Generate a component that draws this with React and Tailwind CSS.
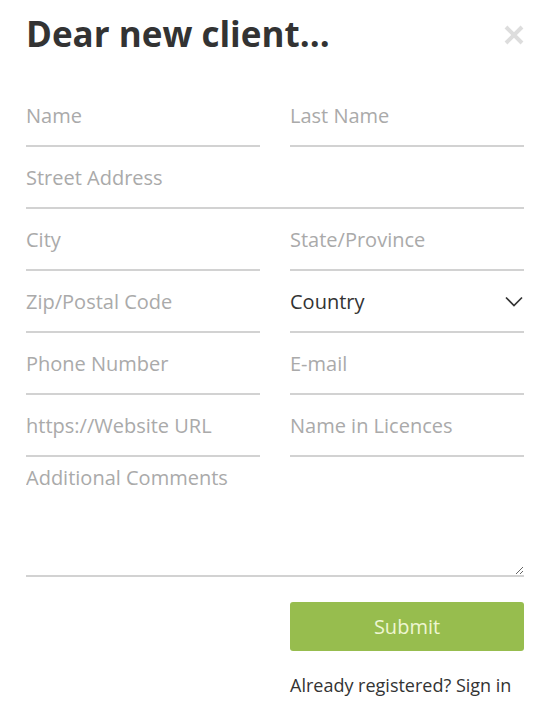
const field =
  'w-full h-[62px] pt-[1px] bg-transparent border-0 border-b-2 border-[#d2d2d2] text-[20px] text-[#333] placeholder:text-[#aaa] focus:outline-none'

function Field({ placeholder, wide }) {
  return (
    <div className={wide ? 'col-span-2' : ''}>
      <input className={field} placeholder={placeholder} />
    </div>
  )
}

export default function App() {
  return (
    <div
      className="w-[552px] min-h-[709px] bg-white pl-[26px] pr-[28px] pt-[15px]"
      style={{ fontFamily: '"Open Sans", "Liberation Sans", sans-serif' }}
    >
      <div className="flex items-start justify-between">
        <h1 className="text-[35px] leading-[38px] font-bold text-[#333]">Dear new client...</h1>
        <button className="mt-[10px] text-[#ddd]" aria-label="Close">
          <svg width="20" height="20" viewBox="0 0 20 20" fill="none" stroke="currentColor" strokeWidth="4">
            <path d="M2 2 L18 18 M18 2 L2 18" />
          </svg>
        </button>
      </div>

      <form className="mt-[32px] grid grid-cols-2 gap-x-[30px]">
        <Field placeholder="Name" />
        <Field placeholder="Last Name" />
        <Field placeholder="Street Address" wide />
        <Field placeholder="City" />
        <Field placeholder="State/Province" />
        <Field placeholder="Zip/Postal Code" />
        <div className="h-[62px] pt-[1px] border-b-2 border-[#d2d2d2] flex items-center justify-between">
          <span className="text-[20px] text-[#333]">Country</span>
          <svg width="18" height="11" viewBox="0 0 18 11" fill="none" stroke="#333" strokeWidth="1.7" className="mr-[1px]">
            <path d="M1 1.5 L9 9.5 L17 1.5" />
          </svg>
        </div>
        <Field placeholder="Phone Number" />
        <Field placeholder="E-mail" />
        <Field placeholder="https://Website URL" />
        <Field placeholder="Name in Licences" />
        <div className="col-span-2">
          <textarea
            className="block w-full h-[120px] pt-[9px] bg-transparent border-0 border-b-2 border-[#d2d2d2] text-[20px] leading-[24px] text-[#333] placeholder:text-[#aaa] focus:outline-none"
            placeholder="Additional Comments"
          />
        </div>
        <div className="col-start-2 mt-[25px]">
          <button
            type="submit"
            className="w-full h-[49px] rounded-[3px] bg-[#97bd4e] text-[20px] text-[#eef6d2]"
          >
            Submit
          </button>
          <p className="mt-[21px] text-[18px] leading-[27px] text-[#333]">Already registered? Sign in</p>
        </div>
      </form>
    </div>
  )
}
